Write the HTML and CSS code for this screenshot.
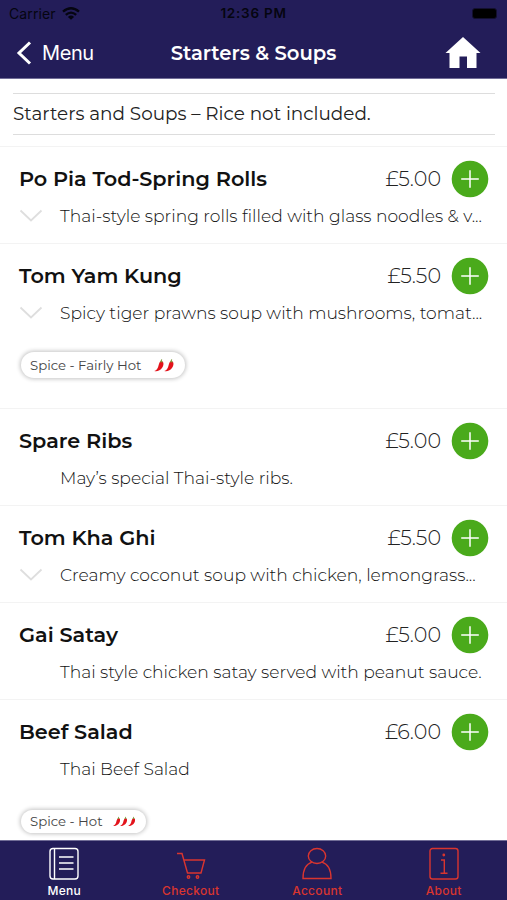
FILE: index.html
```html
<!DOCTYPE html>
<html lang="en">
<head>
<meta charset="utf-8">
<title>Starters &amp; Soups</title>
<link rel="stylesheet" href="styles.css">
</head>
<body>
<svg class="defs" width="0" height="0">
  <symbol id="plus" viewBox="0 0 38 38"><circle cx="19" cy="19" r="18.3" fill="#4aaa1b"/><path d="M19 10.2v17.6M10.2 19h17.6" stroke="#fff" stroke-width="1.5"/></symbol>
  <symbol id="down" viewBox="0 0 24 14"><path d="M1.5 1.5 12 11.5 22.500 1.500" fill="none" stroke="#dedede" stroke-width="1.8"/></symbol>
  <symbol id="chili" viewBox="0 0 10 13"><path d="M7 2.200C10.300 1.800 9.800 6.200 8.300 8.600 6.300 11.700 3 12.900.3 12.100 3.100 11 3.900 8.900 4.600 6.200 5.200 4.300 5.400 2.800 7 2.200Z" fill="#e3131b"/><path d="M6 3.300 7.300.3 8.200.6 7.800 2 9.200 3.300Z" fill="#7e9b3f"/></symbol>
</svg>
<div class="screen">
  <header class="header">
    <div class="status">
      <div class="carrier"><span>Carrier</span>
        <svg width="18" height="13" viewBox="0 0 18 13"><path d="M1 4.700Q9-2.200 17 4.700M3.800 7.900Q9 3.400 14.200 7.900" fill="none" stroke="#050510" stroke-width="2.300"/><path d="M9 12.800 5.900 9.900Q9 7.300 12.100 9.900Z" fill="#050510"/></svg>
      </div>
      <div class="clock">12:36 PM</div>
      <div class="battery"><i></i></div>
    </div>
    <nav class="nav">
      <div class="back"><svg width="16" height="24" viewBox="0 0 16 24"><path d="M14 1.500 3 12l11 10.500" fill="none" stroke="#fff" stroke-width="3"/></svg><span>Menu</span></div>
      <h1>Starters &amp; Soups</h1>
      <div class="home"><svg width="36" height="32" viewBox="0 0 36 32"><path d="M18 0 35.500 16H31.500V31H22V19.500H14.500V31H4.500V16H.5Z" fill="#fff"/></svg></div>
    </nav>
  </header>
  <main class="content">
    <p class="intro">Starters and Soups – Rice not included.</p>
    <article class="item">
      <div class="top"><h2>Po Pia Tod-Spring Rolls</h2><span class="price">£5.00</span><svg class="add"><use href="#plus"/></svg></div>
      <div class="desc"><svg class="down"><use href="#down"/></svg><p>Thai-style spring rolls filled with glass noodles &amp; v...</p></div>
    </article>
    <article class="item spicy">
      <div class="top"><h2>Tom Yam Kung</h2><span class="price">£5.50</span><svg class="add"><use href="#plus"/></svg></div>
      <div class="desc"><svg class="down"><use href="#down"/></svg><p>Spicy tiger prawns soup with mushrooms, tomat...</p></div>
      <div class="pill fairly"><span>Spice - Fairly Hot</span><div class="chilies"><svg><use href="#chili"/></svg><svg><use href="#chili"/></svg></div></div>
    </article>
    <article class="item">
      <div class="top"><h2>Spare Ribs</h2><span class="price">£5.00</span><svg class="add"><use href="#plus"/></svg></div>
      <div class="desc"><p>May’s special Thai-style ribs.</p></div>
    </article>
    <article class="item">
      <div class="top"><h2>Tom Kha Ghi</h2><span class="price">£5.50</span><svg class="add"><use href="#plus"/></svg></div>
      <div class="desc"><svg class="down"><use href="#down"/></svg><p>Creamy coconut soup with chicken, lemongrass...</p></div>
    </article>
    <article class="item">
      <div class="top"><h2>Gai Satay</h2><span class="price">£5.00</span><svg class="add"><use href="#plus"/></svg></div>
      <div class="desc"><p>Thai style chicken satay served with peanut sauce.</p></div>
    </article>
    <article class="item spicy">
      <div class="top"><h2>Beef Salad</h2><span class="price">£6.00</span><svg class="add"><use href="#plus"/></svg></div>
      <div class="desc"><p>Thai Beef Salad</p></div>
      <div class="pill hot"><span>Spice - Hot</span><div class="chilies"><svg><use href="#chili"/></svg><svg><use href="#chili"/></svg><svg><use href="#chili"/></svg></div></div>
    </article>
  </main>
  <footer class="tabs">
    <div class="tab active"><svg viewBox="0 0 32 34"><rect x="2" y="1.500" width="28" height="30.500" rx="3"/><path d="M6.500 1.500V32M11 10H25.500M11 16H25.500M11 22H25.500"/></svg><span>Menu</span></div>
    <div class="tab"><svg viewBox="0 0 32 34"><path d="M2 6.500H7L12.500 26H26L29.500 13H9"/><circle cx="13.500" cy="30" r="1.200"/><circle cx="22.500" cy="30" r="1.200"/></svg><span>Checkout</span></div>
    <div class="tab"><svg viewBox="0 0 32 34"><ellipse cx="16" cy="9" rx="8.700" ry="7.500"/><path d="M11 15.200C5 17 2 22 2 31.500H30C30 22 27 17 21 15.200"/></svg><span>Account</span></div>
    <div class="tab"><svg viewBox="0 0 32 34"><rect x="2" y="1.500" width="28" height="30.500" rx="2.500"/><path d="M13 13H16.300V26M12.500 26.300H19.500"/><circle cx="15.800" cy="8" r=".7"/></svg><span>About</span></div>
  </footer>
</div>
</body>
</html>
```
FILE: styles.css
```css
* { box-sizing: border-box; }
body { margin: 0; font-family: Montserrat, Inter, sans-serif; color: #111; background: #fff; }
h1, h2, p { margin: 0; white-space: nowrap; }
svg { display: block; flex: none; }
.defs { position: absolute; }
.screen { width: 507px; height: 900px; display: flex; flex-direction: column; overflow: hidden; }
.header { height: 79px; flex: none; background: #231d59; border-bottom: 1px solid #716d97; }
.status { height: 27px; display: grid; grid-template-columns: 1fr auto 1fr; align-items: center; color: #050510; font: 14px/27px Inter, sans-serif; }
.carrier { display: flex; align-items: center; gap: 6px; padding-left: 9px; letter-spacing: .1px; }
.clock { font-weight: 600; font-size: 13.500px; letter-spacing: .75px; }
.battery { display: flex; justify-content: flex-end; padding-right: 10px; }
.battery i { width: 25px; height: 11px; border-radius: 3px; background: #000; border: 1px solid #13102f; }
.nav { height: 51px; display: grid; grid-template-columns: 1fr auto 1fr; align-items: center; color: #fff; }
.back { display: flex; align-items: center; gap: 10px; padding-left: 16px; font: 20px/24px Inter, sans-serif; letter-spacing: -.4px; }
.nav h1 { font-size: 19.600px; font-weight: 600; line-height: 24px; }
.home { display: flex; justify-content: flex-end; padding-right: 26px; }
.content { flex: 1; min-height: 0; overflow: hidden; }
.intro { height: 42px; margin: 14px 12px 11px 13px; border-top: 1px solid #ddd; border-bottom: 1px solid #ddd; font-size: 18.400px; line-height: 40px; color: #222; }
.item { height: 97px; border-top: 1px solid #f3f3f3; padding: 12px 18px 0 19px; }
.item.spicy { height: 165px; }
.top { display: flex; align-items: center; height: 39px; }
h2 { font-size: 20.800px; font-weight: 600; line-height: 38px; flex: 1; }
.price { font-size: 20.700px; font-weight: 300; color: #222; margin-right: 10px; }
.add { width: 38px; height: 38px; }
.desc { display: flex; align-items: center; height: 35px; padding-left: 41px; font-size: 17.150px; font-weight: 300; color: #111; }
.down { width: 24px; height: 14px; margin-left: -41px; margin-right: 17px; }
.pill { display: flex; align-items: center; justify-content: space-between; height: 26px; margin: 22px 0 0 2px; padding: 0 11px 0 9px; border-radius: 13px; box-shadow: 0 0 4px 1px rgba(0,0,0,.24); font-size: 13.250px; color: #444; white-space: nowrap; }
.fairly { width: 164px; }
.hot { width: 125px; height: 23px; margin-top: 23.500px; }
.chilies { display: flex; }
.chilies svg { width: 10px; height: 13px; }
.hot .chilies svg { width: 7.500px; height: 11px; }
.tabs { height: 60px; flex: none; display: grid; grid-template-columns: repeat(4, 1fr); background: #231d59; border-top: 1px solid #716d97; padding-left: 1px; }
.tab { display: flex; flex-direction: column; align-items: center; padding-top: 6px; color: #d9352f; font: 500 12px/15px Inter, sans-serif; letter-spacing: .3px; }
.tab svg { width: 32px; height: 34px; fill: none; stroke: currentColor; stroke-width: 1.400; margin-bottom: 2px; }
.tab.active { color: #fff; }
```
